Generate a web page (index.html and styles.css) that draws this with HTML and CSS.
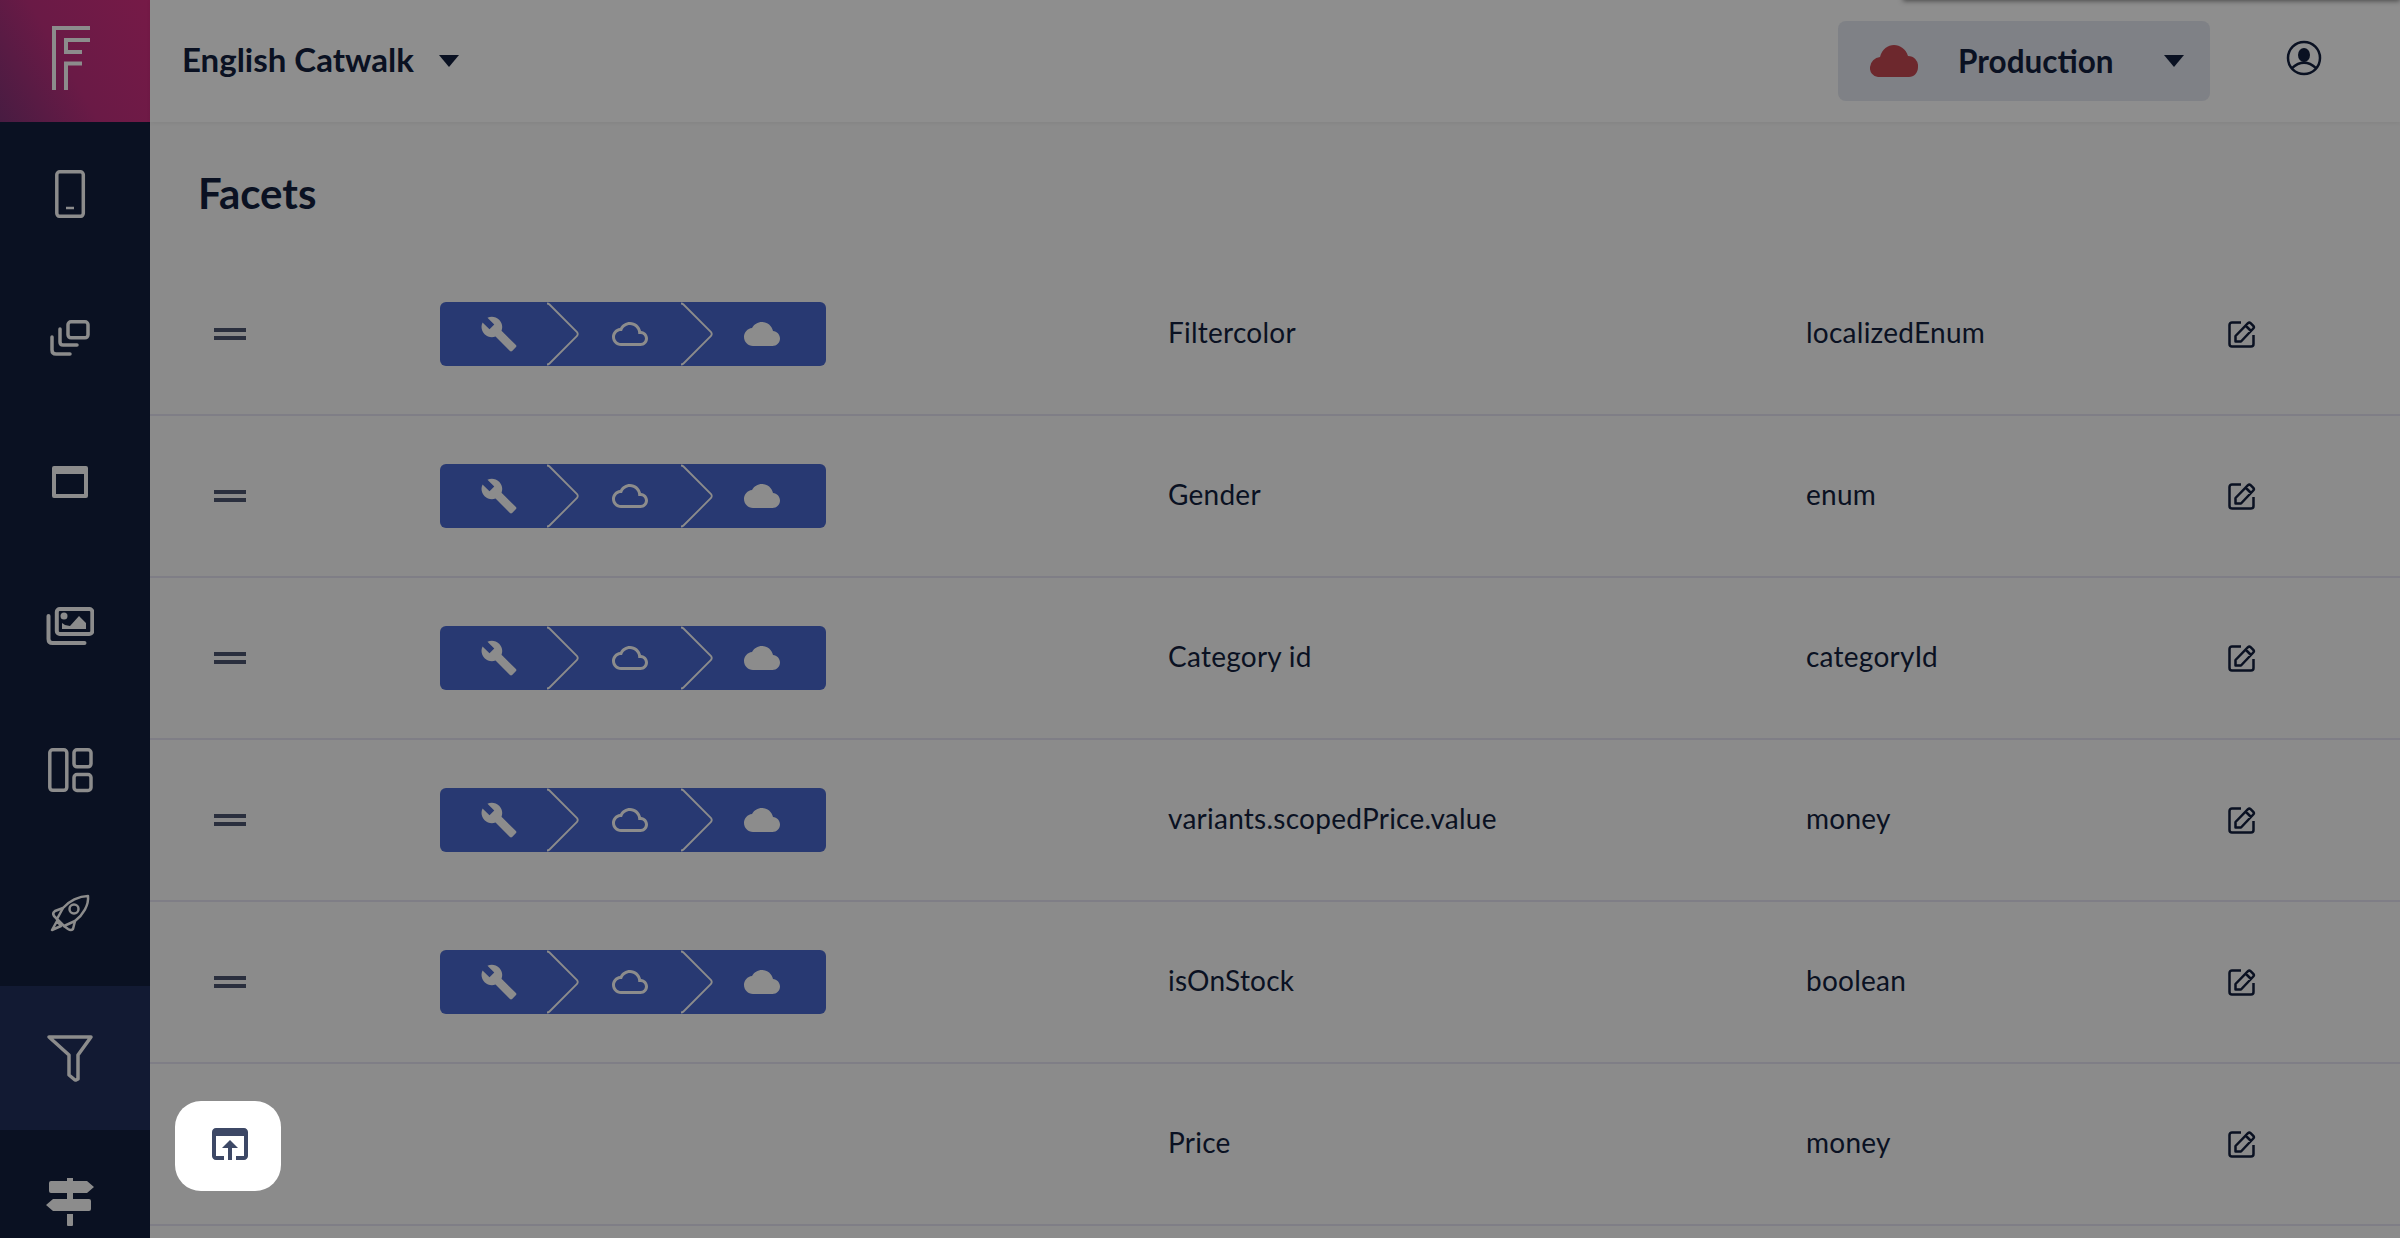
FILE: index.html
```html
<!DOCTYPE html>
<html lang="en">
<head>
    <meta charset="UTF-8" />
    <title>Facets</title>
    <link rel="stylesheet" href="styles.css">
</head>
<body>

<!-- shared icons -->
<svg class="defs" width="0" height="0">
    <symbol id="i-build" viewBox="0 0 24 24"><path d="M22.7 19l-9.1-9.1c.9-2.3.4-5-1.5-6.9-2-2-5-2.4-7.4-1.3L9 6 6 9 1.6 4.7C.4 7.1.9 10.1 2.9 12.1c1.9 1.9 4.6 2.4 6.9 1.5l9.1 9.1c.4.4 1 .4 1.4 0l2.3-2.3c.5-.4.5-1.1.1-1.4z"/></symbol>
    <symbol id="i-cloud" viewBox="0 0 24 24"><path d="M19.35 10.04C18.67 6.59 15.64 4 12 4 9.11 4 6.6 5.64 5.35 8.04 2.34 8.36 0 10.91 0 14c0 3.31 2.69 6 6 6h13c2.76 0 5-2.24 5-5 0-2.64-2.05-4.78-4.65-4.96z"/></symbol>
    <symbol id="i-cloud-line" viewBox="0 0 24 24"><path d="M19.35 10.04C18.67 6.59 15.64 4 12 4 9.11 4 6.6 5.64 5.35 8.04 2.34 8.36 0 10.91 0 14c0 3.31 2.69 6 6 6h13c2.76 0 5-2.24 5-5 0-2.64-2.05-4.78-4.65-4.96zM19 18H6c-2.21 0-4-1.79-4-4s1.79-4 4-4h.71C7.37 7.69 9.48 6 12 6c3.04 0 5.5 2.46 5.5 5.5v.5H19c1.66 0 3 1.34 3 3s-1.34 3-3 3z"/></symbol>
    <symbol id="i-chevron" viewBox="0 0 34 64"><path d="M1 1.500q1.500 0 2.500 1L31 30q1.500 2 0 4L3.500 61.500q-1 1-2.500 1" fill="none" stroke="currentColor" stroke-width="1.800"/></symbol>
    <symbol id="i-edit" viewBox="0 0 28 28"><path d="M13 2.500H4a2.500 2.500 0 0 0-2.500 2.500v19A2.500 2.500 0 0 0 4 26.500h19a2.500 2.500 0 0 0 2.500-2.500v-9" fill="none" stroke="currentColor" stroke-width="2.500"/><path d="M7.500 21.500v-5.500L20 3.200q1.300-1.200 2.600 0l2.700 2.700q1.200 1.300 0 2.600L13 21.500zM18 6l5.500 5.500" fill="none" stroke="currentColor" stroke-width="2.500" stroke-linejoin="round"/></symbol>
    <symbol id="i-handle" viewBox="0 0 32 12"><path d="M0 0h32v4H0zM0 8h32v4H0z"/></symbol>
</svg>

<div class="app">
    <nav class="sidebar">
        <div class="logo">
            <svg width="48" height="74" viewBox="0 0 48 74" fill="none" stroke="currentColor" stroke-width="4">
                <path d="M8 66V4h36M44 16H20v12h16M36 39.500H20V66"/>
            </svg>
        </div>
        <a class="nav-item">
            <svg viewBox="0 0 48 48" fill="none" stroke="currentColor" stroke-width="3.500"><rect x="10.800" y="1.800" width="26.500" height="44.500" rx="3"/><path d="M20 38h8" stroke-width="2.500"/></svg>
        </a>
        <a class="nav-item">
            <svg viewBox="0 0 48 48" fill="none" stroke="currentColor" stroke-width="3.500" stroke-linecap="round"><rect x="22" y="7.800" width="20" height="16" rx="3"/><path d="M14 15v13q0 3 3 3h14M6 23v13q0 4 4 4h14"/></svg>
        </a>
        <a class="nav-item">
            <svg viewBox="0 0 48 48"><path fill-rule="evenodd" d="M8 8h32q2 0 2 2v28q0 2-2 2H8q-2 0-2-2V10q0-2 2-2zM10 16v20h28V16z"/></svg>
        </a>
        <a class="nav-item">
            <svg viewBox="0 0 48 48" fill="none" stroke="currentColor" stroke-width="4" stroke-linecap="round"><rect x="10.800" y="7" width="35.500" height="25" rx="3"/><path d="M2.500 14v23q0 4 4 4h32"/><circle cx="18" cy="14" r="3.500" fill="currentColor" stroke="none"/><path d="M16 27v-6l3 2 5 1 9-10 7 7v6z" fill="currentColor" stroke="none"/></svg>
        </a>
        <a class="nav-item">
            <svg viewBox="0 0 48 48" fill="none" stroke="currentColor" stroke-width="3.500"><rect x="3.800" y="3.800" width="17" height="40.500" rx="3"/><rect x="28" y="3.800" width="17" height="17" rx="3"/><rect x="28" y="28.500" width="17" height="16" rx="3"/></svg>
        </a>
        <a class="nav-item">
            <svg viewBox="0 0 48 48" fill="none" stroke="currentColor" stroke-width="2.500" stroke-linejoin="round"><path d="M42 6C33 6 23 11 17 18L11 29l7 7 11-5C37 25 43 15 42 6z"/><circle cx="28" cy="19" r="4.500"/><path d="M17 18l-8 3q-3 2-1 5l3 3M29 31l-2 8q-2 2-5 0l-4-3M11 31L6 40l9-4z"/></svg>
        </a>
        <a class="nav-item active">
            <svg viewBox="0 0 48 48" fill="none" stroke="currentColor" stroke-width="3.500" stroke-linejoin="round"><path d="M3 3h42L32 21v24l-2 1-1 0-6-5V21z"/></svg>
        </a>
        <a class="nav-item">
            <svg viewBox="0 0 48 48"><path d="M21 0h6v3h14l7 6-7 6H5q-2 0-2-2V5q0-2 2-2h16zM21 15h6v6h16q2 0 2 2v8q0 2-2 2H7l-7-6 7-6h14zM21 36h6v11q0 1-1 1h-4q-1 0-1-1z"/></svg>
        </a>
    </nav>

    <main class="main">
        <header class="topbar">
            <div class="project">
                <span>English Catwalk</span>
                <i class="caret"></i>
            </div>
            <div class="env">
                <svg class="env-cloud" viewBox="0 0 48 32"><path d="M8 32a9 9 0 0 1-8-10 11 11 0 0 1 10-10C12 4 18 0 24 0s12 4 14 11a10 10 0 0 1 10 11c0 6-4 10-9 10z"/></svg>
                <span>Production</span>
                <i class="caret"></i>
            </div>
            <svg class="account" viewBox="0 0 36 36" fill="none" stroke="currentColor" stroke-width="2.500"><circle cx="18" cy="18" r="16"/><path d="M5.700 28.300Q18 17 30.300 28.300"/><ellipse cx="18" cy="15" rx="6" ry="7" fill="currentColor" stroke="none"/></svg>
        </header>

        <h1 class="title">Facets</h1>

        <div class="row">
            <svg class="handle"><use href="#i-handle"/></svg>
            <div class="pipeline">
                <svg class="p-build"><use href="#i-build"/></svg>
                <svg class="chev"><use href="#i-chevron"/></svg>
                <svg class="p-cloud"><use href="#i-cloud-line"/></svg>
                <svg class="chev"><use href="#i-chevron"/></svg>
                <svg class="p-cloud last"><use href="#i-cloud"/></svg>
            </div>
            <span class="cell">Filtercolor</span>
            <span class="cell">localizedEnum</span>
            <svg class="edit"><use href="#i-edit"/></svg>
        </div>
        <div class="row">
            <svg class="handle"><use href="#i-handle"/></svg>
            <div class="pipeline">
                <svg class="p-build"><use href="#i-build"/></svg>
                <svg class="chev"><use href="#i-chevron"/></svg>
                <svg class="p-cloud"><use href="#i-cloud-line"/></svg>
                <svg class="chev"><use href="#i-chevron"/></svg>
                <svg class="p-cloud last"><use href="#i-cloud"/></svg>
            </div>
            <span class="cell">Gender</span>
            <span class="cell">enum</span>
            <svg class="edit"><use href="#i-edit"/></svg>
        </div>
        <div class="row">
            <svg class="handle"><use href="#i-handle"/></svg>
            <div class="pipeline">
                <svg class="p-build"><use href="#i-build"/></svg>
                <svg class="chev"><use href="#i-chevron"/></svg>
                <svg class="p-cloud"><use href="#i-cloud-line"/></svg>
                <svg class="chev"><use href="#i-chevron"/></svg>
                <svg class="p-cloud last"><use href="#i-cloud"/></svg>
            </div>
            <span class="cell">Category id</span>
            <span class="cell">categoryId</span>
            <svg class="edit"><use href="#i-edit"/></svg>
        </div>
        <div class="row">
            <svg class="handle"><use href="#i-handle"/></svg>
            <div class="pipeline">
                <svg class="p-build"><use href="#i-build"/></svg>
                <svg class="chev"><use href="#i-chevron"/></svg>
                <svg class="p-cloud"><use href="#i-cloud-line"/></svg>
                <svg class="chev"><use href="#i-chevron"/></svg>
                <svg class="p-cloud last"><use href="#i-cloud"/></svg>
            </div>
            <span class="cell">variants.scopedPrice.value</span>
            <span class="cell">money</span>
            <svg class="edit"><use href="#i-edit"/></svg>
        </div>
        <div class="row">
            <svg class="handle"><use href="#i-handle"/></svg>
            <div class="pipeline">
                <svg class="p-build"><use href="#i-build"/></svg>
                <svg class="chev"><use href="#i-chevron"/></svg>
                <svg class="p-cloud"><use href="#i-cloud-line"/></svg>
                <svg class="chev"><use href="#i-chevron"/></svg>
                <svg class="p-cloud last"><use href="#i-cloud"/></svg>
            </div>
            <span class="cell">isOnStock</span>
            <span class="cell">boolean</span>
            <svg class="edit"><use href="#i-edit"/></svg>
        </div>
        <div class="row">
            <span></span>
            <span></span>
            <span class="cell">Price</span>
            <span class="cell">money</span>
            <svg class="edit"><use href="#i-edit"/></svg>
        </div>
    </main>
</div>

<!-- sits above the dimmed page -->
<button class="publish">
    <svg viewBox="0 0 24 24"><path d="M19 4H5c-1.110 0-2 .9-2 2v12c0 1.100.89 2 2 2h4v-2H5V8h14v10h-4v2h4c1.100 0 2-.9 2-2V6c0-1.100-.89-2-2-2zm-7 6l-4 4h3v6h2v-6h3l-4-4z"/></svg>
</button>
<div class="menu-edge"></div>

</body>
</html>
```

FILE: styles.css
```css
html, body {
    margin: 0;
    height: 100%;
    overflow: hidden;
}
body {
    font-family: 'Lato', sans-serif;
    background: #8b8b8b;
    color: #0a1122;
}
.defs {
    position: absolute;
}
.app {
    display: flex;
    height: 1238px;
}

/* sidebar */
.sidebar {
    flex: 0 0 150px;
    background: #0a1122;
    color: #8c8c8c;
    overflow: hidden;
}
.logo {
    height: 122px;
    box-sizing: border-box;
    padding: 24px 0 0 46px;
    background: linear-gradient(60deg, #481c42 0%, #6a1a46 45%, #761a47 100%);
}
.nav-item {
    display: flex;
    align-items: center;
    justify-content: center;
    height: 144px;
    padding-right: 10px;
}
.nav-item svg {
    width: 48px;
    height: 48px;
    fill: currentColor;
}
.nav-item svg[fill="none"] {
    fill: none;
}
.nav-item.active {
    background: #121a33;
}

/* top bar */
.main {
    flex: 1;
    min-width: 0;
}
.topbar {
    display: flex;
    align-items: center;
    height: 122px;
    box-sizing: border-box;
    padding-left: 32px;
    background: #8e8e8e;
    box-shadow: 0 1px 4px rgba(0, 0, 0, 0.06);
    font-weight: 700;
}
.project {
    display: flex;
    align-items: center;
    gap: 25px;
    flex: 1;
    font-size: 33px;
}
.project span {
    margin-bottom: 5px;
}
.caret {
    width: 0;
    height: 0;
    border-left: 10px solid transparent;
    border-right: 10px solid transparent;
    border-top: 12px solid #0a1122;
}
.env {
    display: flex;
    align-items: center;
    width: 372px;
    height: 80px;
    box-sizing: border-box;
    padding: 0 26px 0 32px;
    background: #7f8186;
    border-radius: 8px;
    font-size: 31.5px;
}
.env span {
    margin: 0 0 1px 40px;
    flex: 1;
}
.env-cloud {
    width: 48px;
    height: 32px;
    fill: #6d282d;
}
.account {
    width: 36px;
    height: 36px;
    margin: -6px 78px 0 76px;
    color: #0a1122;
}

/* table */
.title {
    margin: 0;
    height: 132px;
    box-sizing: border-box;
    padding: 46px 0 0 48px;
    font-size: 42px;
    line-height: 50px;
    font-weight: 700;
}
.row {
    display: grid;
    grid-template-columns: 226px 728px 638px 422px 1fr;
    align-items: center;
    height: 162px;
    box-sizing: border-box;
    padding-left: 64px;
    border-bottom: 2px solid #7f7e86;
    font-size: 28px;
    letter-spacing: 0.25px;
}
.cell {
    padding-bottom: 4px;
}
.handle {
    width: 32px;
    height: 12px;
    fill: #2a2f3e;
}
.pipeline {
    display: grid;
    grid-template-columns: 106px 34px 100px 34px 112px;
    align-items: center;
    justify-items: center;
    width: 386px;
    height: 64px;
    background: #283972;
    border-radius: 6px;
    color: #8c8c8c;
    fill: #8c8c8c;
}
.p-build {
    width: 38px;
    height: 38px;
    margin-left: 12px;
}
.p-cloud {
    width: 36px;
    height: 36px;
}
.p-cloud.last {
    margin-right: 16px;
}
.chev {
    width: 34px;
    height: 64px;
}
.edit {
    width: 28px;
    height: 28px;
    color: #0a1122;
}

/* floating */
.publish {
    position: absolute;
    left: 175px;
    top: 1101px;
    display: flex;
    align-items: center;
    justify-content: center;
    width: 106px;
    height: 90px;
    padding: 0 0 4px 4px;
    border: none;
    border-radius: 26px;
    background: #fff;
}
.publish svg {
    width: 48px;
    height: 48px;
    fill: #3d4866;
}
.menu-edge {
    position: absolute;
    left: 1903px;
    right: 0;
    top: -6px;
    height: 6px;
    box-shadow: 0 1px 5px rgba(0, 0, 0, 0.5);
}
```
